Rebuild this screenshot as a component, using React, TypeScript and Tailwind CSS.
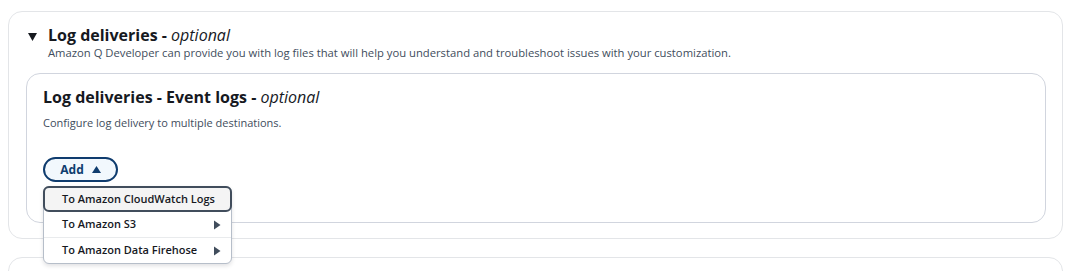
const font = { fontFamily: '"Open Sans", "Noto Sans", Arial, sans-serif' };

const RightCaret = () => (
  <svg width="8" height="10" viewBox="0 0 8 10" className="fill-[#414d5c]">
    <path d="M1 0.5 L7.5 5 L1 9.5 Z" />
  </svg>
);

const App = () => {
  return (
    <div className="w-[1080px] h-[271px] overflow-hidden bg-white text-[#16191f] pt-[11px]" style={font}>
      <div className="ml-[8px] mr-[17px] h-[228px] rounded-[14px] border border-[#e3e5e8] flex flex-col">
        <div className="pl-[19px] pt-[13px] flex items-start gap-[11px]">
          <svg width="9" height="8" viewBox="0 0 9 8" className="mt-[8px] fill-[#16191f]">
            <path d="M0 0 H9 L4.5 8 Z" />
          </svg>
          <div>
            <h2 className="text-[16px] leading-[20px] font-bold">
              Log deliveries - <span className="italic font-normal">optional</span>
            </h2>
            <p className="text-[11.25px] leading-[16px] text-[#414d5c]">
              Amazon Q Developer can provide you with log files that will help you understand and troubleshoot issues
              with your customization.
            </p>
          </div>
        </div>

        <div className="relative ml-[17px] mr-[16px] mt-[12px] h-[150px] rounded-[14px] border border-[#d1d5de] pl-[16px] pt-[13px]">
          <h3 className="text-[16px] leading-[20px] font-bold">
            Log deliveries - Event logs - <span className="italic font-normal">optional</span>
          </h3>
          <p className="text-[11px] leading-[16px] text-[#414d5c] mt-[8px]">
            Configure log delivery to multiple destinations.
          </p>

          <button className="mt-[26px] w-[75px] h-[25px] rounded-full border-2 border-[#0f3c6e] bg-[#f2f8fd] flex items-center justify-center gap-[8px] text-[12px] font-bold text-[#0f3c6e]">
            Add
            <svg width="9" height="7" viewBox="0 0 9 7" className="fill-[#0f3c6e]">
              <path d="M0 7 L4.5 0 L9 7 Z" />
            </svg>
          </button>

          {/* dropdown menu */}
          <div className="absolute left-[16px] top-[112px] w-[189px] z-10 rounded-[6px] border border-[#b6bec9] bg-white shadow-[0_2px_4px_rgba(0,7,22,0.12)] text-[11px] font-semibold text-[#16191f]">
            <div className="h-[26px] -m-px rounded-[6px] border-2 border-[#414d5c] bg-[#f4f4f4] flex items-center pl-[17px]">
              To Amazon CloudWatch Logs
            </div>
            <div className="h-[26px] mt-px flex items-center justify-between pl-[18px] pr-[10px] border-b border-[#e9ebed]">
              To Amazon S3
              <RightCaret />
            </div>
            <div className="h-[25px] flex items-center justify-between pl-[18px] pr-[10px]">
              To Amazon Data Firehose
              <RightCaret />
            </div>
          </div>
        </div>
      </div>

      <div className="mt-[18px] ml-[8px] mr-[17px] h-[60px] rounded-[14px] border border-[#e3e5e8]" />
    </div>
  );
};

export default App;
